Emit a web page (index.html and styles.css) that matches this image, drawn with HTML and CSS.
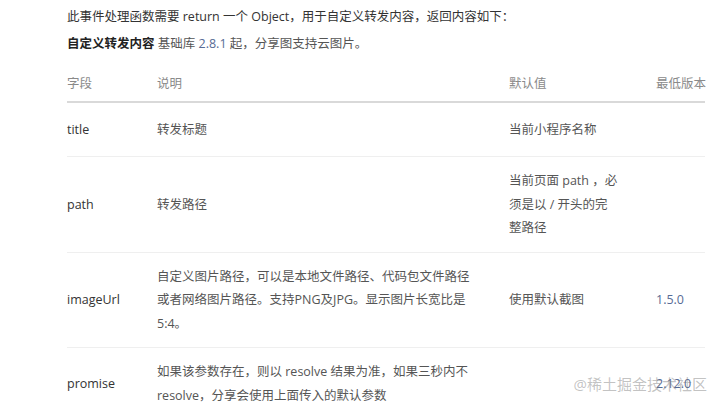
FILE: index.html
```html
<!DOCTYPE html>
<html lang="zh-CN">
<head>
    <meta charset="UTF-8">
    <meta name="viewport" content="width=device-width, initial-scale=1.0">
    <title>onShareAppMessage 返回值</title>
    <link rel="stylesheet" href="styles.css">
</head>
<body>
    <div class="doc">
        <p class="intro">此事件处理函数需要 return 一个 Object，用于自定义转发内容，返回内容如下：</p>
        <p class="note"><strong>自定义转发内容</strong> 基础库 <a href="#">2.8.1</a> 起，分享图支持云图片。</p>

        <!-- 返回值字段表 -->
        <table class="fields">
            <colgroup>
                <col class="col-name">
                <col class="col-desc">
                <col class="col-default">
                <col class="col-version">
            </colgroup>
            <thead>
                <tr>
                    <th>字段</th>
                    <th>说明</th>
                    <th>默认值</th>
                    <th>最低版本</th>
                </tr>
            </thead>
            <tbody>
                <tr>
                    <td class="name">title</td>
                    <td>转发标题</td>
                    <td>当前小程序名称</td>
                    <td></td>
                </tr>
                <tr>
                    <td class="name">path</td>
                    <td>转发路径</td>
                    <td>当前页面 path ，必须是以 / 开头的完整路径</td>
                    <td></td>
                </tr>
                <tr>
                    <td class="name">imageUrl</td>
                    <td>自定义图片路径，可以是本地文件路径、代码包文件路径或者网络图片路径。支持PNG及JPG。显示图片长宽比是 5:4。</td>
                    <td>使用默认截图</td>
                    <td><a href="#">1.5.0</a></td>
                </tr>
                <tr>
                    <td class="name">promise</td>
                    <td>如果该参数存在，则以 resolve 结果为准，如果三秒内不 resolve，分享会使用上面传入的默认参数</td>
                    <td></td>
                    <td><a href="#">2.12.0</a></td>
                </tr>
            </tbody>
        </table>
    </div>

    <div class="watermark">@稀土掘金技术社区</div>
</body>
</html>
```

FILE: styles.css
```css
body {
    margin: 0;
    background-color: #fff;
    font-family: "Open Sans", "Noto Sans CJK SC", sans-serif;
    font-size: 12.5px;
    line-height: 23.5px;
    color: #444;
}
.doc {
    width: 638px;
    padding: 5px 0 0 67px;
}
p {
    margin: 0;
}
.intro {
    color: #333;
    margin-bottom: 3.5px;
}
.note {
    color: #555;
}
.note strong {
    color: #222;
    font-weight: bold;
}
a {
    color: #576b95;
    text-decoration: none;
}
.fields {
    width: 638px;
    margin-top: 6px;
    border-collapse: collapse;
    table-layout: fixed;
}
.col-name {
    width: 90px;
}
.col-desc {
    width: 352px;
}
.col-default {
    width: 147px;
}
th {
    text-align: left;
    font-weight: normal;
    color: #8a8a8a;
    padding: 10px 0 5.5px;
    border-bottom: 2px solid #d9d9d9;
    white-space: nowrap;
}
tbody tr {
    height: 55px;
    border-bottom: 1px solid #efefef;
}
tbody tr:last-child {
    border-bottom: none;
}
td {
    padding: 12px 37px 12px 0;
    vertical-align: middle;
    color: #555;
}
td:last-child {
    padding-right: 0;
}
td.name {
    color: #333;
}
.watermark {
    position: absolute;
    right: 13px;
    top: 372px;
    font-size: 15px;
    line-height: 24px;
    color: rgba(120, 120, 120, 0.45);
}
```
